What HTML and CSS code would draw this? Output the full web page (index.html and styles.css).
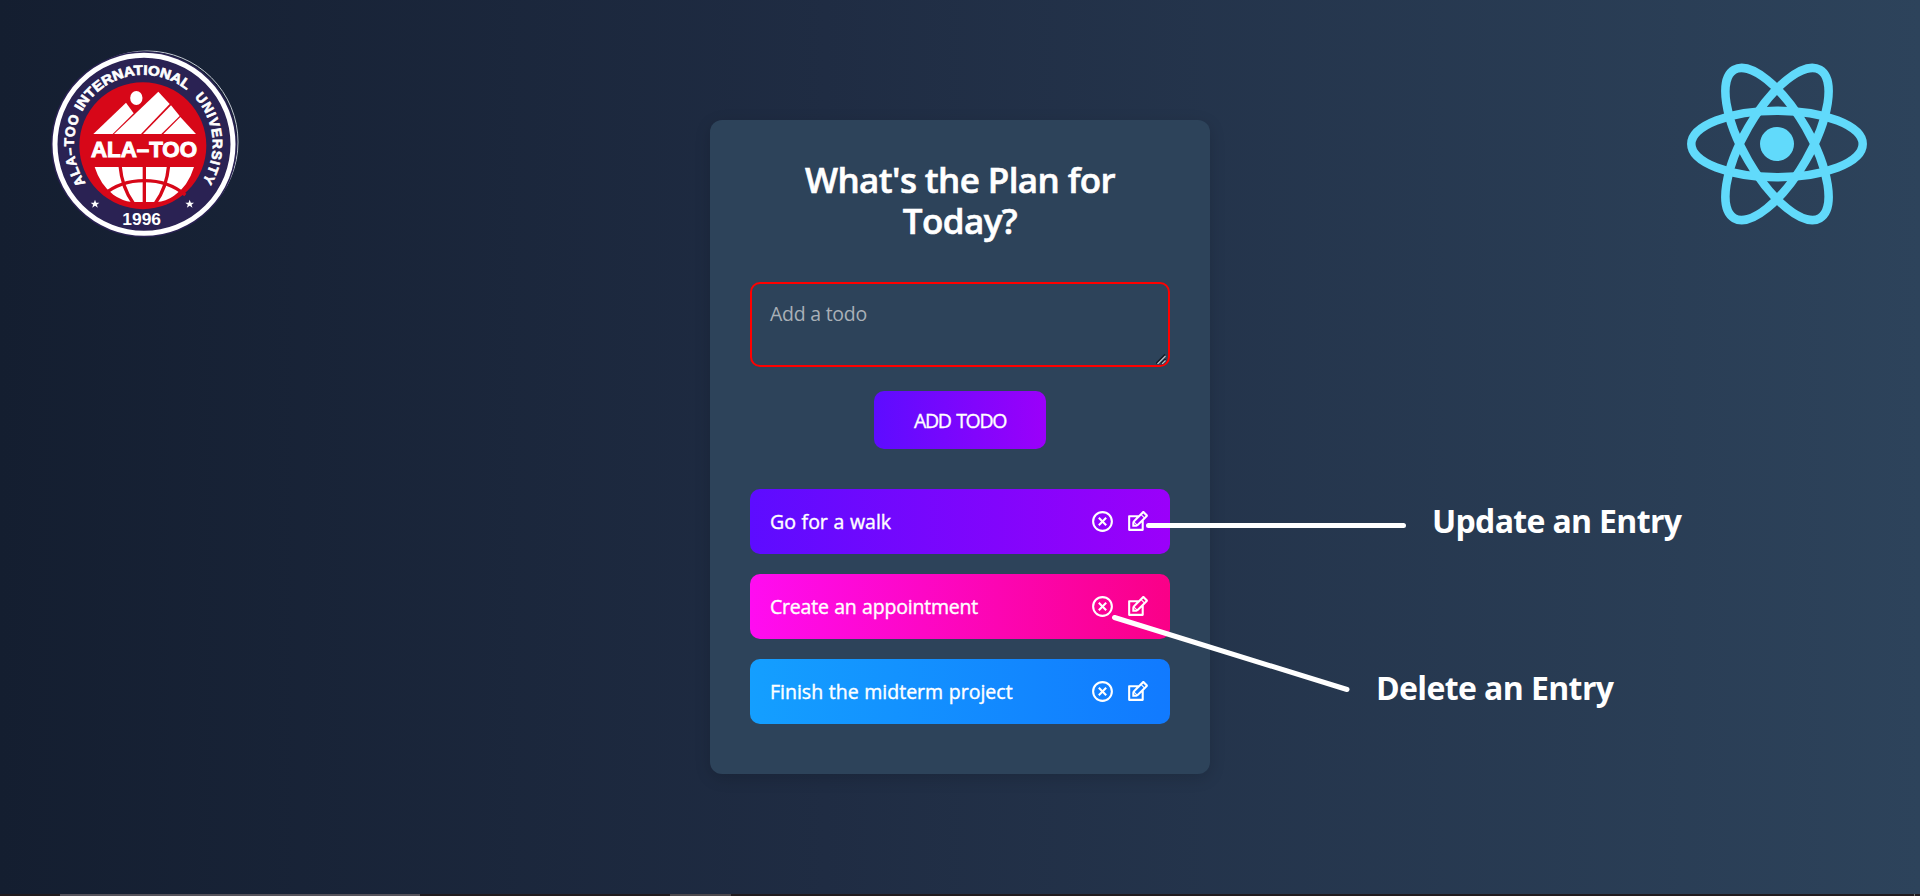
FILE: index.html
```html
<!DOCTYPE html>
<html lang="en">
<head>
<meta charset="utf-8">
<title>Todo App</title>
<link rel="stylesheet" href="styles.css">
</head>
<body>
<svg class="defs" width="0" height="0">
  <symbol id="close" viewBox="0 0 24 24"><path d="M12 22C6.477 22 2 17.523 2 12S6.477 2 12 2s10 4.477 10 10-4.477 10-10 10zm0-2a8 8 0 1 0 0-16 8 8 0 0 0 0 16zm0-9.414l2.828-2.829 1.415 1.415L13.414 12l2.829 2.828-1.415 1.415L12 13.414l-2.828 2.829-1.415-1.415L10.586 12 7.757 9.172l1.415-1.415L12 10.586z"/></symbol>
  <symbol id="edit" viewBox="0 0 24 24"><path d="M21.561 5.318l-2.879-2.879c-.293-.293-.677-.439-1.061-.439-.385 0-.768.146-1.061.439l-3.56 3.561h-9c-.552 0-1 .447-1 1v13c0 .553.448 1 1 1h13c.552 0 1-.447 1-1v-9l3.561-3.561c.293-.293.439-.677.439-1.061s-.146-.767-.439-1.061zm-10.061 9.354l-2.172-2.172 6.293-6.293 2.172 2.172-6.293 6.293zm-2.561-1.339l1.756 1.728-1.695-.061-.061-1.667zm7.061 5.667h-11v-11h6l-3.180 3.180c-.293.293-.478.812-.629 1.289-.16.5-.191 1.056-.191 1.470v3.061h3.061c.414 0 1.108-.1 1.571-.29.464-.19.896-.347 1.188-.64l3.181-3.070v6zm2.500-11.328l-2.172-2.172 1.293-1.293 2.171 2.172-1.292 1.293z"/></symbol>
</svg>
<div class="page">
  <svg class="logo-university" viewBox="0 0 630 630" role="img" aria-label="Ala-Too International University">
    <defs>
      <path id="ring" d="M136.600 429.200A208.500 208.500 0 1 1 484.400 427.300"/>
    </defs>
    <circle cx="321" cy="306" r="273" fill="none" stroke="#c3c8d2" stroke-width="3"/>
    <circle cx="312" cy="313" r="279" fill="#2a2253"/>
    <circle cx="312" cy="313" r="267" fill="none" stroke="#fff" stroke-width="15"/>
    <circle cx="308.500" cy="317" r="190.500" fill="#d70718"/>
    <g class="ring-text">
      <text><textPath href="#ring" startOffset="0" textLength="209">ALA–TOO</textPath></text>
      <text><textPath href="#ring" startOffset="225" textLength="366" lengthAdjust="spacingAndGlyphs">INTERNATIONAL</textPath></text>
      <text><textPath href="#ring" startOffset="622" textLength="272">UNIVERSITY</textPath></text>
    </g>
    <g fill="#fff">
      <ellipse cx="289" cy="174" rx="18.500" ry="21"/>
      <path d="M160 282L258 188 281 220 218 282Z"/>
      <path d="M222 282L355 155 389 192 303 282Z"/>
      <path d="M309 282L393 196 419 228 364 282Z"/>
      <path d="M370 282L421 231 468 282Z"/>
      <text class="name" x="153" y="352" textLength="318" lengthAdjust="spacingAndGlyphs">ALA–TOO</text>
      <text class="year" x="247" y="556" textLength="116" lengthAdjust="spacingAndGlyphs">1996</text>
      <path d="M165 479l3.500 9h9.500l-7.500 6 3 9-8.500-5.500-8.500 5.500 3-9-7.500-6h9.500z"/>
      <path d="M449 479l3.500 9h9.500l-7.500 6 3 9-8.500-5.500-8.500 5.500 3-9-7.500-6h9.500z"/>
      <path d="M164 381H462Q444 440 402 467Q377 485 350 486H276Q245 482 220 464Q181 435 164 381Z"/>
    </g>
    <g fill="none" stroke="#d70718" stroke-width="10">
      <path d="M313 376V492"/>
      <path d="M240 376Q246 443 280 490"/>
      <path d="M386 376Q380 443 346 490"/>
      <path d="M190 465Q240 422 313 422Q386 422 436 465"/>
    </g>
  </svg>

  <main class="todo-app">
    <h1 class="title">What's the Plan for Today?</h1>
    <form class="todo-form">
      <div class="field">
        <textarea class="todo-input" placeholder="Add a todo"></textarea>
        <svg class="grip" viewBox="0 0 10 10"><path class="shade" d="M0 9.500L9 .5M5 9.500L9.500 5"/><path class="line" d="M1.500 10L9.500 2M6 10L9.500 6.500"/></svg>
      </div>
      <button class="todo-button" type="button">ADD TODO</button>
    </form>
    <div class="todo-list">
      <div class="todo-row purple"><span>Go for a walk</span><span class="icons"><svg><use href="#close"/></svg><svg><use href="#edit"/></svg></span></div>
      <div class="todo-row pink"><span>Create an appointment</span><span class="icons"><svg><use href="#close"/></svg><svg><use href="#edit"/></svg></span></div>
      <div class="todo-row blue"><span>Finish the midterm project</span><span class="icons"><svg><use href="#close"/></svg><svg><use href="#edit"/></svg></span></div>
    </div>
  </main>

  <svg class="logo-react" viewBox="-90 -82 180 164" role="img" aria-label="React">
    <circle r="17" fill="#61dafb"/>
    <g fill="none" stroke="#61dafb" stroke-width="8.500">
      <ellipse rx="85.700" ry="33.200"/>
      <ellipse rx="85.700" ry="33.200" transform="rotate(60)"/>
      <ellipse rx="85.700" ry="33.200" transform="rotate(120)"/>
    </g>
  </svg>
</div>
<svg class="notes" viewBox="0 0 1920 896">
  <path d="M1148.500 525.500H1403.500M1114.500 617.500L1347 689.500"/>
  <text x="1432" y="533" textLength="250">Update an Entry</text>
  <text x="1376" y="700" textLength="238">Delete an Entry</text>
</svg>
<div class="taskbar"><i class="window"></i><i class="tab"></i><i class="edge"></i></div>
</body>
</html>
```
FILE: styles.css
```css
* { box-sizing: border-box; margin: 0; padding: 0; }
body {
  height: 896px;
  overflow: hidden;
  display: flex;
  flex-direction: column;
  font-family: "Trebuchet MS", "Open Sans", sans-serif;
  color: #fff;
  background: linear-gradient(90deg, #141e30 0%, #1f2c43 43%, #2d435b 100%);
}
.defs { position: absolute; }
.page {
  flex: 1;
  display: grid;
  grid-template-columns: 1fr 500px 1fr;
  align-items: start;
  padding: 40px 40px 0;
}
.logo-university { width: 210px; height: 210px; }
.logo-react { width: 180px; height: 164px; margin: 22px 13px 0 0; justify-self: end; }
.ring-text { fill: #fff; stroke: #fff; stroke-width: 2; font: bold 41px "Liberation Sans", sans-serif; }
.name { font: bold 65px "Liberation Sans", sans-serif; stroke: #fff; stroke-width: 3; }
.year { font: bold 51px "Liberation Sans", sans-serif; }

.todo-app {
  width: 500px;
  height: 654px;
  margin-top: 80px;
  padding: 40px 40px 0;
  border-radius: 12px;
  background: #2d435a;
  box-shadow: 0 4px 16px rgba(0, 0, 0, .15);
}
.title {
  height: 82px;
  margin-top: -1px;
  font-size: 35px;
  line-height: 41px;
  font-weight: 600;
  letter-spacing: -.6px;
  -webkit-text-stroke: .6px #fff;
  text-align: center;
}
.todo-form { display: flex; flex-direction: column; align-items: center; margin-top: 41px; }
.field { position: relative; height: 85px; }
.grip { position: absolute; right: 4px; bottom: 3px; width: 10px; height: 10px; fill: none; }
.grip .shade { stroke: #101822; stroke-width: 1.500; }
.grip .line { stroke: #b8bfc6; stroke-width: 1.200; }
.todo-input {
  width: 420px;
  height: 85px;
  padding: 16px 18px;
  border: 2px solid red;
  border-radius: 10px;
  outline: none;
  resize: none;
  background: transparent;
  color: #fff;
  font: 19.500px/28px "Trebuchet MS", "Open Sans", sans-serif;
  letter-spacing: -.25px;
}
.todo-input::placeholder { color: #a9b0b7; }
.todo-button {
  width: 172px;
  height: 58px;
  margin-top: 24px;
  padding-top: 1px;
  border: 0;
  border-radius: 10px;
  color: #fff;
  font: 19.500px "Trebuchet MS", "Open Sans", sans-serif;
  letter-spacing: -1.350px;
  word-spacing: 2px;
  -webkit-text-stroke: .35px #fff;
  background: linear-gradient(90deg, #5d0cff, #9b00fa);
}
.todo-list { display: flex; flex-direction: column; gap: 20px; margin-top: 40px; }
.todo-row {
  height: 65px;
  padding: 0 20px;
  border-radius: 10px;
  display: flex;
  align-items: center;
  justify-content: space-between;
  font-size: 19.500px;
  word-spacing: .6px;
  -webkit-text-stroke: .4px #fff;
}
.purple { background: linear-gradient(90deg, #5d0cff, #9b00fa); }
.pink { background: linear-gradient(90deg, #ff0cf1, #fa0087); letter-spacing: -.2px; }
.blue { background: linear-gradient(90deg, #149fff, #117aff); }
.icons { display: flex; gap: 10px; }
.icons svg { width: 25px; height: 25px; fill: #fff; }

.notes { position: absolute; left: 0; top: 0; width: 1920px; height: 896px; }
.notes path { fill: none; stroke: #fff; stroke-width: 5; stroke-linecap: round; }
.notes text { fill: #fff; font: bold 32px "Open Sans", sans-serif; }

.taskbar { height: 2px; display: flex; background: #211b1e; }
.window { width: 360px; margin-left: 60px; background: #55525a; }
.tab { width: 61px; margin-left: 250px; background: #4c484c; }
.edge { width: 1px; margin-left: 1183px; background: #777; }
```
